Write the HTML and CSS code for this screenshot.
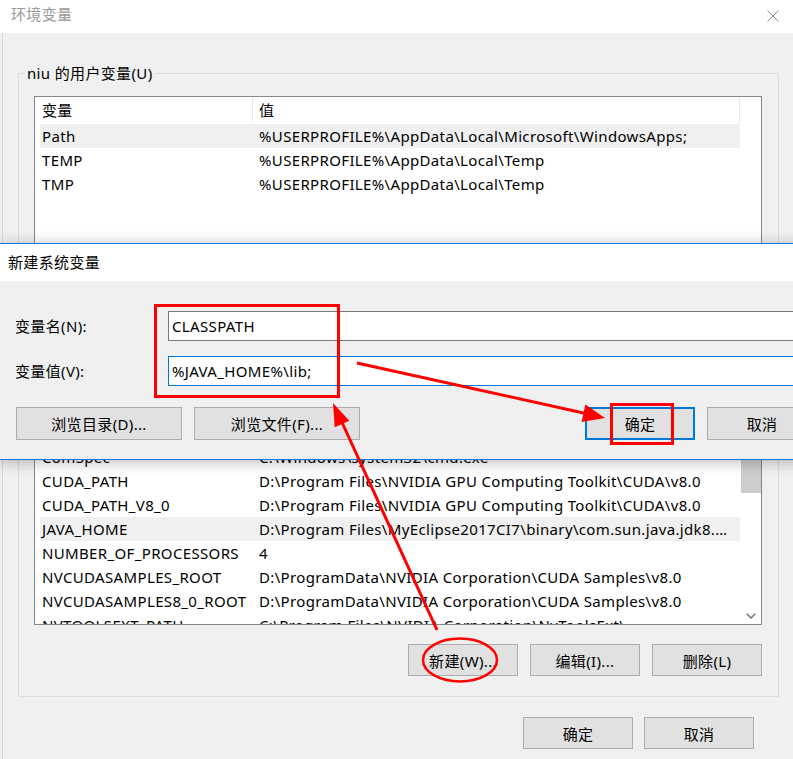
FILE: index.html
```html
<!DOCTYPE html>
<html lang="zh-CN">
<head>
    <meta charset="UTF-8">
    <title>环境变量</title>
    <link rel="stylesheet" href="styles.css">
</head>
<body>

    <!-- Environment variables window -->
    <div class="env-window">
        <div class="titlebar">
            <span class="title">环境变量</span>
            <svg class="close" width="12" height="12" viewBox="0 0 12 12">
                <path d="M0.5 0.5 L11.5 11.5 M11.5 0.5 L0.5 11.5" stroke="#8a8a8a" stroke-width="1" fill="none"/>
            </svg>
        </div>

        <div class="env-body">
            <fieldset class="group user-group">
                <legend>niu 的用户变量(U)</legend>
                <div class="list user-list">
                    <div class="list-main">
                        <div class="list-head">
                            <span class="col-name">变量</span>
                            <span class="col-value">值</span>
                        </div>
                        <div class="row selected"><span class="col-name">Path</span><span class="col-value">%USERPROFILE%\AppData\Local\Microsoft\WindowsApps;</span></div>
                        <div class="row"><span class="col-name">TEMP</span><span class="col-value">%USERPROFILE%\AppData\Local\Temp</span></div>
                        <div class="row"><span class="col-name">TMP</span><span class="col-value">%USERPROFILE%\AppData\Local\Temp</span></div>
                    </div>
                    <div class="no-scroll"></div>
                </div>
            </fieldset>

            <fieldset class="group sys-group">
                <legend>系统变量(S)</legend>
                <div class="list sys-list">
                    <div class="list-main">
                        <div class="list-head">
                            <span class="col-name">变量</span>
                            <span class="col-value">值</span>
                        </div>
                        <div class="row"><span class="col-name">ANT_HOME</span><span class="col-value">D:\apache-ant</span></div>
                        <div class="row"><span class="col-name">asl.log</span><span class="col-value">Destination=file</span></div>
                        <div class="row"><span class="col-name">CATALINA_BASE</span><span class="col-value">D:\apache-tomcat</span></div>
                        <div class="row"><span class="col-name">CATALINA_HOME</span><span class="col-value">D:\apache-tomcat</span></div>
                        <div class="row"><span class="col-name">CMAKE_HOME</span><span class="col-value">D:\Program Files\CMake</span></div>
                        <div class="row"><span class="col-name">ComSpec</span><span class="col-value">C:\Windows\system32\cmd.exe</span></div>
                        <div class="row"><span class="col-name">CUDA_PATH</span><span class="col-value">D:\Program Files\NVIDIA GPU Computing Toolkit\CUDA\v8.0</span></div>
                        <div class="row"><span class="col-name">CUDA_PATH_V8_0</span><span class="col-value">D:\Program Files\NVIDIA GPU Computing Toolkit\CUDA\v8.0</span></div>
                        <div class="row selected"><span class="col-name">JAVA_HOME</span><span class="col-value">D:\Program Files\MyEclipse2017CI7\binary\com.sun.java.jdk8.win32.x86_64_1.8.0.v112</span></div>
                        <div class="row"><span class="col-name">NUMBER_OF_PROCESSORS</span><span class="col-value">4</span></div>
                        <div class="row"><span class="col-name">NVCUDASAMPLES_ROOT</span><span class="col-value">D:\ProgramData\NVIDIA Corporation\CUDA Samples\v8.0</span></div>
                        <div class="row"><span class="col-name">NVCUDASAMPLES8_0_ROOT</span><span class="col-value">D:\ProgramData\NVIDIA Corporation\CUDA Samples\v8.0</span></div>
                        <div class="row"><span class="col-name">NVTOOLSEXT_PATH</span><span class="col-value">C:\Program Files\NVIDIA Corporation\NvToolsExt\</span></div>
                    </div>
                    <div class="scrollbar">
                        <div class="scroll-arrow"></div>
                        <div class="scroll-track">
                            <div class="scroll-thumb" style="margin-top:144px;height:34px"></div>
                        </div>
                        <div class="scroll-arrow">
                            <svg width="10" height="6" viewBox="0 0 10 6">
                                <path d="M0.8 0.8 L5 5 L9.2 0.8" stroke="#6d6d6d" stroke-width="1.4" fill="none"/>
                            </svg>
                        </div>
                    </div>
                </div>
                <div class="group-buttons">
                    <button class="win-btn">新建(W)...</button>
                    <button class="win-btn">编辑(I)...</button>
                    <button class="win-btn">删除(L)</button>
                </div>
            </fieldset>

            <div class="window-buttons">
                <button class="win-btn">确定</button>
                <button class="win-btn">取消</button>
            </div>
        </div>
    </div>

    <!-- New system variable dialog -->
    <div class="new-dialog">
        <div class="dialog-title">新建系统变量</div>
        <div class="dialog-body">
            <div class="form-row">
                <label class="form-label">变量名(N):</label>
                <div class="text-input">CLASSPATH</div>
            </div>
            <div class="form-row">
                <label class="form-label">变量值(V):</label>
                <div class="text-input focused">%JAVA_HOME%\lib;</div>
            </div>
            <div class="dialog-buttons">
                <div class="btn-group">
                    <button class="win-btn wide">浏览目录(D)...</button>
                    <button class="win-btn wide">浏览文件(F)...</button>
                </div>
                <div class="btn-group">
                    <button class="win-btn default">确定</button>
                    <button class="win-btn">取消</button>
                </div>
            </div>
        </div>
    </div>

    <!-- Red annotations -->
    <svg class="marks" width="793" height="759" viewBox="0 0 793 759">
        <g stroke="#ff0000" fill="none">
            <rect x="155.5" y="305.5" width="183" height="91" stroke-width="3"/>
            <rect x="611.5" y="404.5" width="61" height="39" stroke-width="3"/>
            <ellipse cx="460" cy="660" rx="37" ry="21.5" stroke-width="2.5"/>
            <line x1="357" y1="363" x2="588" y2="414" stroke-width="3"/>
            <line x1="437" y1="630" x2="340" y2="418" stroke-width="3"/>
        </g>
        <g fill="#ff0000">
            <polygon points="605,418 585.4,404.4 581.6,422"/>
            <polygon points="333,403 349.3,420.7 334.7,427.3"/>
        </g>
    </svg>

</body>
</html>
```

FILE: styles.css
```css
/* General */
body {
    margin: 0;
    width: 793px;
    height: 759px;
    overflow: hidden;
    position: relative;
    background: #f0f0f0;
    font-family: "Noto Sans", "Noto Sans CJK SC", sans-serif;
    font-size: 15px;
    letter-spacing: 0.35px;
    color: #000;
}

/* Main window */
.env-window {
    height: 759px;
    display: flex;
    flex-direction: column;
}

.titlebar {
    height: 33px;
    box-sizing: border-box;
    background: #fff;
    display: flex;
    align-items: center;
    justify-content: space-between;
    padding: 0 14px 6px 11px;
    flex-shrink: 0;
}

.titlebar .title {
    color: #999;
}

.close {
    margin-top: 4px;
}

.env-body {
    flex: 1;
    margin-left: 2px;
    border-left: 1px solid #d6d6d6;
    padding-top: 30px;
}

/* Group boxes */
.group {
    margin: 0 14px 0 15px;
    border: 1px solid #dcdcdc;
    padding: 13px 16px 8px 15px;
    min-width: 0;
}

.group legend {
    margin-left: -9px;
    padding: 0 2px;
    line-height: 20px;
}

.sys-group {
    padding-bottom: 20px;
}

/* List views */
.list {
    border: 1px solid #828790;
    background: #fff;
    display: grid;
    grid-template-columns: 700px 21px;
    padding-left: 5px;
    overflow: hidden;
}

.user-list {
    height: 157px;
}

.sys-list {
    height: 326px;
}

.list-main {
    overflow: hidden;
}

.list-head {
    display: flex;
    height: 27px;
}

.list-head .col-name,
.list-head .col-value {
    border-right: 1px solid #e5e5e5;
    height: 25px;
    margin-top: 1px;
    line-height: 25px;
}

.list-head .col-value {
    flex: 1;
}

.row {
    display: flex;
    height: 24px;
    line-height: 24px;
    white-space: nowrap;
}

.row.selected {
    background: #f0f0f0;
}

.col-name {
    width: 213px;
    box-sizing: border-box;
    padding-left: 2px;
    flex-shrink: 0;
    overflow: hidden;
}

.col-value {
    flex: 1;
    min-width: 0;
    padding-left: 6px;
    padding-right: 4px;
    overflow: hidden;
    white-space: nowrap;
    text-overflow: ellipsis;
}

/* Scrollbar */
.scrollbar {
    display: flex;
    flex-direction: column;
    padding-left: 1px;
}

.scroll-arrow {
    height: 17px;
    display: flex;
    align-items: center;
    justify-content: center;
}

.scroll-track {
    flex: 1;
}

.scroll-thumb {
    background: #cdcdcd;
}

/* Buttons */
.win-btn {
    width: 110px;
    height: 33px;
    background: #e1e1e1;
    border: 1px solid #adadad;
    font-family: inherit;
    font-size: 15px;
    letter-spacing: 0.35px;
    color: #000;
    padding: 0;
}

.win-btn.wide {
    width: 166px;
}

.win-btn.default {
    border: 2px solid #0078d7;
}

.group-buttons {
    display: flex;
    justify-content: flex-end;
    gap: 12px;
    margin-top: 19px;
}

.group-buttons .win-btn {
    height: 32px;
}

.window-buttons {
    display: flex;
    justify-content: flex-end;
    gap: 11px;
    margin-top: 20px;
    padding-right: 39px;
}

.window-buttons .win-btn {
    height: 32px;
}

/* New variable dialog */
.new-dialog {
    position: absolute;
    top: 243px;
    left: -1px;
    width: 845px;
    height: 217px;
    box-sizing: border-box;
    border: 1px solid #0078d7;
    background: #f0f0f0;
    box-shadow: 0 2px 14px rgba(0, 0, 0, 0.28);
}

.dialog-title {
    height: 37px;
    line-height: 36px;
    background: #fff;
    padding-left: 8px;
}

.dialog-body {
    padding: 30px 26px 0 15px;
}

.form-row {
    display: flex;
    align-items: center;
    margin-bottom: 15px;
}

.form-label {
    width: 153px;
    flex-shrink: 0;
    margin-top: -1px;
}

.text-input {
    flex: 1;
    height: 30px;
    box-sizing: border-box;
    border: 1px solid #7a7a7a;
    background: #fff;
    line-height: 28px;
    padding-left: 3px;
}

.text-input.focused {
    border-color: #0078d7;
}

.dialog-buttons {
    display: flex;
    justify-content: space-between;
    margin-top: 21px;
    padding-left: 1px;
}

.btn-group {
    display: flex;
    gap: 12px;
}

/* Annotations */
.marks {
    position: absolute;
    top: 0;
    left: 0;
    pointer-events: none;
}
```
